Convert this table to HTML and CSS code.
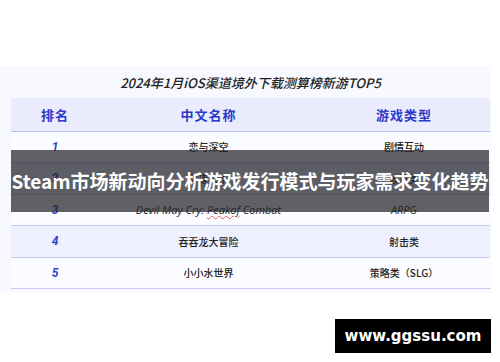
FILE: index.html
```html
<!DOCTYPE html>
<html lang="zh">
<head>
<meta charset="utf-8">
<link rel="stylesheet" href="styles.css">
</head>
<body>
<div class="page">
  <div class="card">
    <div class="title">2024年1月iOS渠道境外下载测算榜新游TOP5</div>
    <div class="table">
      <div class="row head">
        <div class="c1">排名</div><div class="c2">中文名称</div><div class="c3">游戏类型</div>
      </div>
      <div class="row">
        <div class="c1 num">1</div><div class="c2">恋与深空</div><div class="c3">剧情互动</div>
      </div>
      <div class="row alt">
        <div class="c1 num">2</div><div class="c2">寻道大千</div><div class="c3">放置类</div>
      </div>
      <div class="row">
        <div class="c1 num">3</div><div class="c2 en">Devil May Cry: <span class="sq">Peakof</span> Combat</div><div class="c3 en">ARPG</div>
      </div>
      <div class="row alt">
        <div class="c1 num">4</div><div class="c2">吞吞龙大冒险</div><div class="c3">射击类</div>
      </div>
      <div class="row">
        <div class="c1 num">5</div><div class="c2">小小水世界</div><div class="c3">策略类（SLG）</div>
      </div>
    </div>
  </div>
  <div class="band">Steam市场新动向分析游戏发行模式与玩家需求变化趋势</div>
  <div class="mark">www.ggssu.com</div>
</div>
</body>
</html>
```

FILE: styles.css
```css
html, body {
  margin: 0;
  padding: 0;
  background: #ffffff;
}
.page {
  position: relative;
  width: 500px;
  height: 362px;
  overflow: hidden;
  font-family: "Noto Sans CJK SC", "Noto Sans", sans-serif;
}
.card {
  margin-top: 66px;
  width: 491px;
  height: 227px;
  background: #f8f9fe;
  box-sizing: border-box;
  padding-left: 11px;
  padding-right: 1px;
}
.title {
  height: 32px;
  line-height: 34px;
  text-align: center;
  font-size: 13px;
  font-style: italic;
  font-weight: 500;
  color: #222222;
}
.table {
  display: flex;
  flex-direction: column;
}
.row {
  display: grid;
  grid-template-columns: 88px 219px 1fr;
  height: 30.5px;
  align-items: center;
  border-bottom: 1px solid #c5cbf6;
  font-size: 10px;
  color: #222222;
  font-weight: 500;
  background: #fbfcff;
}
.row > div {
  text-align: center;
}
.row.head {
  height: 32.7px;
  background: #eaecfd;
  border-bottom: 1.5px solid #b5bdf5;
  font-size: 13px;
  font-weight: 700;
  color: #2b39c9;
  letter-spacing: 1px;
}
.row.alt {
  background: #eef0fd;
}
.num {
  font-family: "Roboto", sans-serif;
  font-style: italic;
  font-weight: 700;
  font-size: 12px;
  color: #3140c6;
}
.en {
  font-family: "Open Sans", sans-serif;
  font-style: italic;
  font-size: 11px;
  color: #1e1e1e;
}
.sq {
  text-decoration: underline wavy #e06070;
  text-decoration-thickness: 1px;
}
.band {
  position: absolute;
  left: 11px;
  top: 150px;
  width: 478px;
  height: 62px;
  background: rgba(38, 38, 42, 0.72);
  color: #ffffff;
  font-size: 19px;
  font-weight: 700;
  line-height: 62px;
  text-align: center;
  white-space: nowrap;
}
.mark {
  position: absolute;
  left: 335px;
  top: 319px;
  width: 156px;
  height: 34px;
  background: #000000;
  color: #ffffff;
  font-family: "DejaVu Sans", sans-serif;
  font-weight: 700;
  font-size: 15px;
  line-height: 34px;
  text-align: center;
}
```
